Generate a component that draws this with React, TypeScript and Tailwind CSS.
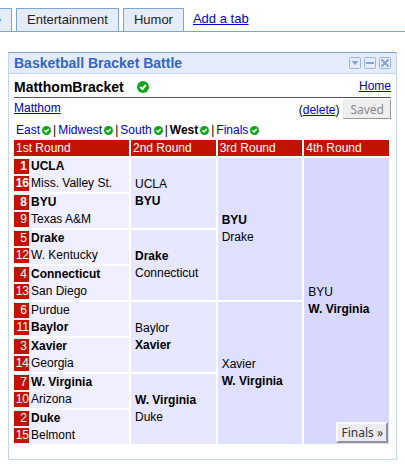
import { clsx } from 'clsx';

type Team = { seed: number; name: string; won?: boolean; boldSeed?: boolean };
type Pick = { name: string; won?: boolean };

const tabs = ['Entertainment', 'Humor'];

const regions = ['East', 'Midwest', 'South', 'West', 'Finals'];

const firstRound: [Team, Team][] = [
  [{ seed: 1, name: 'UCLA', won: true, boldSeed: true }, { seed: 16, name: 'Miss. Valley St.', boldSeed: true }],
  [{ seed: 8, name: 'BYU', won: true, boldSeed: true }, { seed: 9, name: 'Texas A&M' }],
  [{ seed: 5, name: 'Drake', won: true }, { seed: 12, name: 'W. Kentucky' }],
  [{ seed: 4, name: 'Connecticut', won: true }, { seed: 13, name: 'San Diego' }],
  [{ seed: 6, name: 'Purdue' }, { seed: 11, name: 'Baylor', won: true }],
  [{ seed: 3, name: 'Xavier', won: true }, { seed: 14, name: 'Georgia' }],
  [{ seed: 7, name: 'W. Virginia', won: true }, { seed: 10, name: 'Arizona' }],
  [{ seed: 2, name: 'Duke', won: true }, { seed: 15, name: 'Belmont' }]
];

const secondRound: Pick[][] = [
  [{ name: 'UCLA' }, { name: 'BYU', won: true }],
  [{ name: 'Drake', won: true }, { name: 'Connecticut' }],
  [{ name: 'Baylor' }, { name: 'Xavier', won: true }],
  [{ name: 'W. Virginia', won: true }, { name: 'Duke' }]
];

const thirdRound: Pick[][] = [
  [{ name: 'BYU', won: true }, { name: 'Drake' }],
  [{ name: 'Xavier' }, { name: 'W. Virginia', won: true }]
];

const fourthRound: Pick[] = [{ name: 'BYU' }, { name: 'W. Virginia', won: true }];

function Check({ className }: { className: string }) {
  return (
    <svg viewBox="0 0 12 12" className={clsx('shrink-0', className)} aria-hidden="true">
      <circle cx="6" cy="6" r="6" fill="#12a51c" />
      <path d="M3.2 5.8 5.4 8 8.9 3.9" fill="none" stroke="#fff" strokeWidth="1.9" />
    </svg>
  );
}

function PanelButton({ label, children }: { label: string; children: React.ReactNode }) {
  return (
    <button aria-label={label} className="block size-3">
      <svg viewBox="0 0 12 12" className="size-3" fill="none" stroke="#9db5de">
        <rect x="0.5" y="0.5" width="11" height="11" rx="1" />
        {children}
      </svg>
    </button>
  );
}

function Picks({ picks }: { picks: Pick[] }) {
  return (
    <>
      {picks.map(pick => (
        <div key={pick.name} className={clsx('leading-[17px]', pick.won && 'font-bold')}>
          {pick.name}
        </div>
      ))}
    </>
  );
}

function Game({ teams }: { teams: Team[] }) {
  return (
    <>
      {teams.map(team => (
        <div key={team.seed} className="flex h-[17px] items-center gap-0.5">
          <span
            className={clsx(
              'h-[15px] w-[15px] shrink-0 bg-[#c41200] text-right leading-[15px] text-white',
              team.seed < 10 && 'pr-0.5',
              team.boldSeed && 'font-bold'
            )}
          >
            {team.seed}
          </span>
          <span className={clsx('whitespace-nowrap leading-[15px]', team.won && 'font-bold')}>{team.name}</span>
        </div>
      ))}
    </>
  );
}

function Bracket() {
  return (
    <div className="-ml-0.5">
      <table className="w-full table-fixed border-separate border-spacing-0.5 text-xs text-black">
        <colgroup>
          <col className="w-[115px]" />
          <col />
          <col />
          <col />
        </colgroup>
        <thead>
          <tr>
            {['1st Round', '2nd Round', '3rd Round', '4th Round'].map(round => (
              <th key={round} className="bg-[#c41200] px-0.5 py-0 text-left font-normal leading-4 text-white">
                {round}
              </th>
            ))}
          </tr>
        </thead>
        <tbody>
          {firstRound.map((teams, i) => (
            <tr key={i}>
              <td className="bg-[#f0efff] p-0">
                <Game teams={teams} />
              </td>
              {i % 2 === 0 && (
                <td rowSpan={2} className="bg-[#e7e7ff] px-1 py-0 align-middle">
                  <Picks picks={secondRound[i / 2]} />
                </td>
              )}
              {i % 4 === 0 && (
                <td rowSpan={4} className="bg-[#dfdfff] px-1 py-0 align-middle">
                  <Picks picks={thirdRound[i / 4]} />
                </td>
              )}
              {i === 0 && (
                <td rowSpan={8} className="relative bg-[#d7d7ff] px-1 py-0 align-middle">
                  <Picks picks={fourthRound} />
                  <button className="absolute right-px bottom-px h-[21px] border-2 border-t-[#f8f8fc] border-r-[#92929a] border-b-[#92929a] border-l-[#f8f8fc] bg-[#ececf0] px-[3px] font-['Noto_Sans',sans-serif] text-xs leading-4 text-[#333]">
                    Finals »
                  </button>
                </td>
              )}
            </tr>
          ))}
        </tbody>
      </table>
    </div>
  );
}

export default function App() {
  return (
    <div className="bg-white pb-2 font-['Liberation_Sans',Arial,sans-serif] text-xs text-black">
      <nav className="flex h-8 items-end gap-1 border-b border-[#7aa5d6] text-[13px] text-[#222]">
        <a href="#" className="flex h-[23px] w-3 items-center justify-end overflow-hidden border-t border-r border-[#7aa5d6] bg-[#e5ecf9] pr-2.5">
          e
        </a>
        {tabs.map(tab => (
          <a key={tab} href="#" className="flex h-[23px] items-center border border-b-0 border-[#7aa5d6] bg-[#e5ecf9] px-2.5">
            {tab}
          </a>
        ))}
        <a href="#" className="ml-[5px] pb-0.5 leading-5 text-[#0000cc] underline">
          Add a tab
        </a>
      </nav>

      <section className="mx-2 mt-5 border border-[#c3d5f0] border-t-[#7aa5d6]">
        <header className="flex h-[21px] items-center justify-between border-b border-[#c3d5f0] bg-[#e5ecf9] px-[5px]">
          <h2 className="text-sm font-bold text-[#3366cc]">Basketball Bracket Battle</h2>
          <div className="flex gap-[3px]">
            <PanelButton label="Menu">
              <path d="M2.5 4h7L6 8z" fill="#86a3d8" stroke="none" />
            </PanelButton>
            <PanelButton label="Minimize">
              <path d="M2 6h8" stroke="#86a3d8" strokeWidth="2" />
            </PanelButton>
            <PanelButton label="Close">
              <path d="m2.5 2.5 7 7m0-7-7 7" stroke="#86a3d8" strokeWidth="2" />
            </PanelButton>
          </div>
        </header>

        <div className="px-[5px] pb-[13px]">
          <div className="flex h-6 items-center justify-between border-b border-[#555]">
            <div className="flex items-center gap-[13px] pt-0.5">
              <h3 className="text-sm leading-5 font-bold">MatthomBracket</h3>
              <Check className="size-3" />
            </div>
            <a href="#" className="text-[#0000cc] underline">
              Home
            </a>
          </div>

          <div className="flex items-start justify-between pt-0.5">
            <a href="#" className="leading-4 text-[#0000cc] underline">
              Matthom
            </a>
            <div className="flex items-center gap-1">
              <span>
                (
                <a href="#" className="text-[#0000cc] underline">
                  delete
                </a>
                )
              </span>
              <button
                disabled
                className="h-[19px] border border-t-[#e8e8e8] border-r-[#999] border-b-[#999] border-l-[#e8e8e8] bg-[#efefef] px-1.5 font-['Noto_Sans',sans-serif] text-xs leading-4 text-[#888]"
              >
                Saved
              </button>
            </div>
          </div>

          <div className="flex items-center pt-1 pl-0.5 leading-[15px]">
            {regions.map((region, i) => (
              <span key={region} className="flex items-center">
                {i > 0 && <span className="px-0.5">|</span>}
                {region === 'West' ? (
                  <b>{region}</b>
                ) : (
                  <a href="#" className="text-[#0000cc]">
                    {region}
                  </a>
                )}
                <Check className="ml-0.5 size-[9px]" />
              </span>
            ))}
          </div>

          <Bracket />
        </div>
      </section>
    </div>
  );
}
